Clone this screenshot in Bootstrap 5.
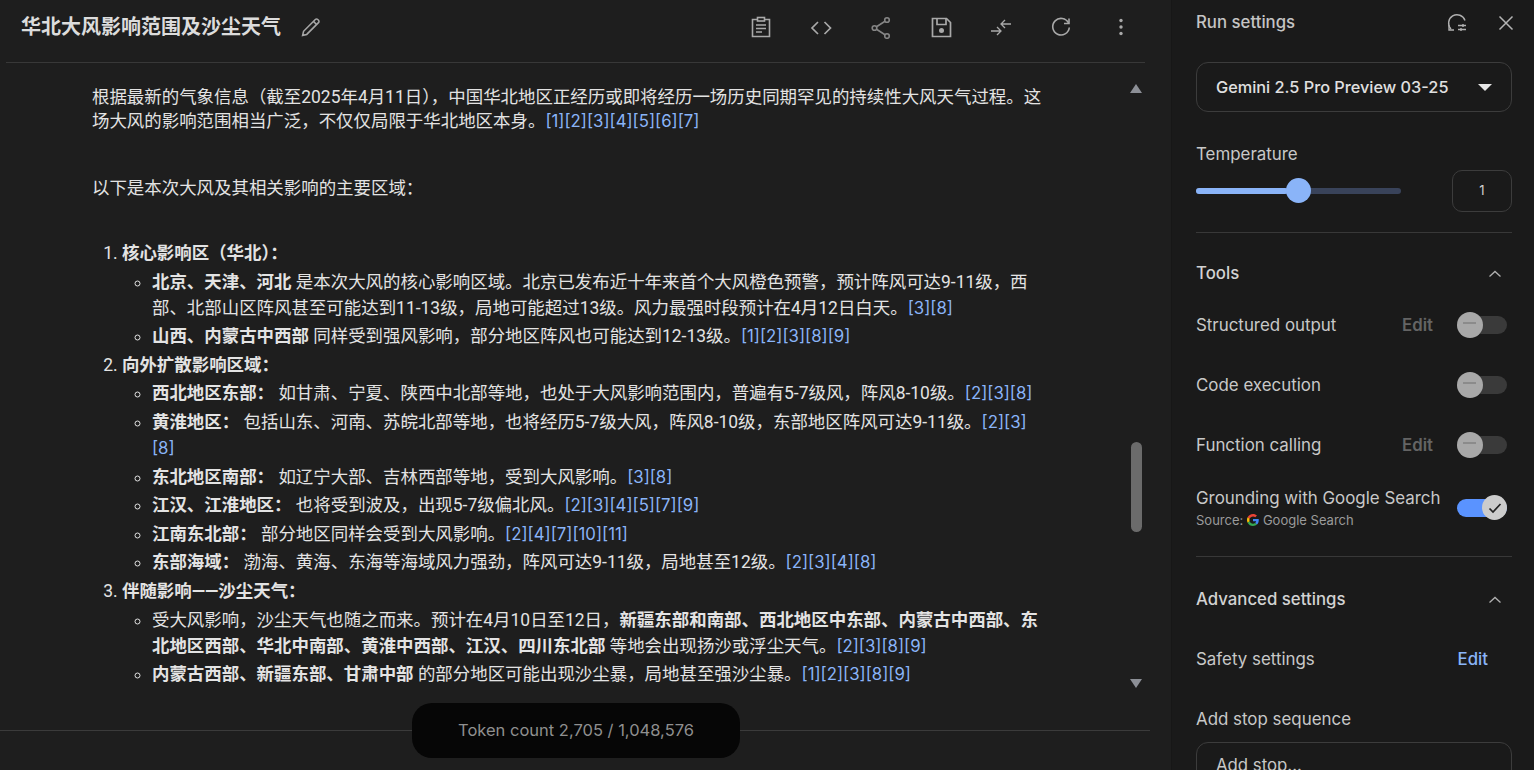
<!DOCTYPE html>
<html lang="zh-CN">
<head>
  <meta charset="UTF-8">
  <title>Run settings</title>
  <meta name="viewport" content="width=device-width, initial-scale=1">
  <link href="https://cdn.jsdelivr.net/npm/bootstrap@5.3.0/dist/css/bootstrap.min.css" rel="stylesheet">
  <style>
    html, body { height: 770px; overflow: hidden; }
    body { background: #1e1e1e; color: #e3e3e3; font-family: Inter, "Noto Sans CJK SC", sans-serif; font-size: 16px; }
    .app-main { width: 1172px; height: 770px; position: relative; border-right: 1px solid #171717; }
    .top-bar { height: 63px; margin: 0 26px 0 6px; padding: 0 12px 8px 15px; border-bottom: 1px solid #383838; }
    .doc-title { font-size: 20px; font-weight: 700; color: #dcdcdc; margin: 0; line-height: 1; }
    .edit-pen { margin-left: 19px; }
    .top-tools { gap: 36px; color: #a9a9a9; }
    .top-tools svg { display: block; }
    .chat-wrap { height: 667px; }
    .chat-text { width: 950px; margin-left: 92px; padding-top: 22px; font-family: Roboto, "Noto Sans CJK SC", sans-serif; font-size: 17.45px; line-height: 24px; color: #e3e3e3; }
    .chat-text p { margin: 0; }
    .para-gap { height: 43px; }
    .list-gap { height: 40px; }
    .chat-text b { font-weight: 700; }
    .cite { color: #8ab4f8; font-family: Inter, sans-serif; font-size: 16.8px; }
    .outer-list { margin: 0; padding: 0 0 0 30px; line-height: 26px; }
    .outer-list > li { margin-bottom: 2.6px; }
    .inner-list { list-style: circle; margin: 0; padding: 0 0 0 30px; }
    .inner-list > li { margin-top: 2.6px; }
    .scroll-col { position: absolute; left: 1126px; top: 63px; width: 20px; height: 640px; }
    .scroll-thumb { position: absolute; left: 5px; top: 379px; width: 11px; height: 90px; border-radius: 6px; background: #6b6b6b; }
    .arrow-up, .arrow-down { position: absolute; left: 4px; width: 0; height: 0; border-left: 6.5px solid transparent; border-right: 6.5px solid transparent; }
    .arrow-up { top: 21px; border-bottom: 9px solid #8c8f96; }
    .arrow-down { top: 616px; border-top: 9px solid #8c8f96; }
    .foot-line { margin: 0 21px 0 0; border-top: 1px solid #3b3b3b; }
    .token-pill { position: absolute; left: 412px; top: 703px; width: 328px; height: 55px; border-radius: 20px; background: #060606; color: #8f8f8f; font-size: 16.5px; }
    .side-panel { width: 362px; height: 770px; background: #1a1a1a; padding: 0 22px 0 24px; overflow: hidden; flex: none; }
    .side-head { height: 45px; }
    .side-title { font-size: 16.8px; font-weight: 500; color: #c4c4c4; }
    .head-icons { gap: 28px; margin-right: -4px; }
    .model-box { height: 50px; margin-top: 17px; border: 1px solid #3c3c3c; border-radius: 12px; padding: 0 19px; font-size: 16.3px; font-weight: 500; color: #e0e0e0; }
    .caret-down { width: 0; height: 0; border-left: 7px solid transparent; border-right: 7px solid transparent; border-top: 7px solid #e6e6e6; }
    .side-label { font-size: 16.9px; color: #c8c8c8; line-height: 20px; }
    .temp-label { margin-top: 32px; }
    .temp-row { height: 42px; margin-top: 6px; }
    .temp-track { position: relative; width: 205px; height: 6px; border-radius: 3px; background: #39435a; }
    .temp-fill { height: 6px; border-radius: 3px; background: #8ab4f8; }
    .temp-knob { position: absolute; left: 90px; top: -10px; width: 25px; height: 25px; border-radius: 50%; background: #8ab4f8; }
    .temp-val { width: 60px; height: 42px; border: 1px solid #3c3c3c; border-radius: 10px; font-size: 13px; color: #d0d0d0; }
    .side-rule { border-top: 1px solid #383838; }
    .rule-one { margin-top: 20px; }
    .tools-head { margin-top: 28px; }
    .sect-title { font-size: 16.8px; font-weight: 500; color: #d2d2d2; }
    .sect-chev { margin-right: 9px; }
    .tool-list { margin-top: 9px; }
    .tool-row { height: 60px; }
    .ground-row { margin-top: 3px; }
    .edit-off { font-size: 16.8px; font-weight: 600; color: #646464; margin-right: 24px; }
    .edit-on { font-size: 16.8px; font-weight: 500; color: #8ab4f8; margin-right: 24px; }
    .sw-off, .sw-on { position: relative; width: 50px; height: 18px; border-radius: 9px; flex: none; margin-right: 5px; }
    .sw-off { background: #3a3a3a; }
    .sw-off .sw-dot { position: absolute; left: 0; top: -4px; width: 26px; height: 26px; border-radius: 50%; background: #a8a8a8; }
    .sw-off .sw-dot::after { content: ""; position: absolute; left: 6px; top: 10px; width: 13px; height: 2px; background: #8b8b8b; }
    .sw-on { background: #5a93ff; }
    .sw-on .sw-dot { position: absolute; left: 25px; top: -4px; width: 25px; height: 25px; border-radius: 50%; background: #cccccc; }
    .src-line { font-size: 13px; color: #9b9b9b; line-height: 16px; margin-top: 4px; }
    .rule-two { margin-top: 18px; }
    .adv-head { margin-top: 30px; }
    .safety-row { margin-top: 17px; }
    .stop-label { margin-top: 20px; }
    .stop-box { height: 60px; margin-top: 13px; border: 1px solid #3c3c3c; border-radius: 12px; padding: 10px 19px; font-size: 16.8px; color: #c8c8c8; }
  </style>
</head>
<body>
  <div class="d-flex">
    <div class="app-main flex-grow-0 flex-shrink-0">
      <div class="top-bar d-flex align-items-center justify-content-between">
        <div class="d-flex align-items-center">
          <h1 class="doc-title">华北大风影响范围及沙尘天气</h1>
          <svg class="edit-pen" width="21" height="21" viewBox="0 0 20 20" fill="none" stroke="#a6a6a6" stroke-width="1.5"><path d="M2.5 17.5l.9-3.900L14.6 2.400a1.600 1.600 0 0 1 2.300 0l.7.7a1.600 1.600 0 0 1 0 2.300L6.400 16.600z"/><path d="M12.800 4.200l3 3"/></svg>
        </div>
        <div class="top-tools d-flex align-items-center">
          <svg width="24" height="24" viewBox="0 0 24 24" fill="none" stroke="currentColor" stroke-width="1.6"><path d="M8.500 4.500H3.500v17h17v-17h-5"/><rect x="8.500" y="2.500" width="7" height="3.500" fill="#1e1e1e"/><path d="M7 10h10M7 13.500h10M7 17h6"/></svg>
          <svg width="24" height="24" viewBox="0 0 24 24" fill="none" stroke="currentColor" stroke-width="1.7"><path d="M9 7l-6 6 6 6M15.500 7l6 6-6 6"/></svg>
          <svg width="24" height="24" viewBox="0 0 24 24" fill="none" stroke="#858585" stroke-width="1.6"><circle cx="18" cy="5" r="2.300"/><circle cx="5.500" cy="13" r="2.300"/><circle cx="18" cy="21" r="2.300"/><path d="M7.500 11.700l8.500-5.400M7.500 14.300l8.500 5.400"/></svg>
          <svg width="24" height="24" viewBox="0 0 24 24" fill="none" stroke="currentColor" stroke-width="1.7"><path d="M3.500 3.500h14l4 4v14h-18z"/><path d="M8 3.500v6h9v-6"/><circle cx="12.500" cy="15.500" r="2.500" fill="currentColor" stroke="none"/></svg>
          <svg width="24" height="24" viewBox="0 0 24 24" fill="none" stroke="currentColor" stroke-width="1.300"><path d="M2 16h10M8 12l4 4-4 4M22 9H12M16 5l-4 4 4 4"/></svg>
          <svg width="24" height="24" viewBox="0 0 24 24" fill="none" stroke="currentColor" stroke-width="1.600"><path d="M19.500 8A8.300 8.300 0 1 0 20.300 12.500"/><path d="M20 3.500V8.500h-5"/></svg>
          <svg width="24" height="24" viewBox="0 0 24 24" fill="currentColor"><circle cx="12" cy="5.500" r="1.700"/><circle cx="12" cy="12" r="1.700"/><circle cx="12" cy="18.500" r="1.700"/></svg>
        </div>
      </div>

      <div class="chat-wrap">
        <div class="chat-text">
          <p>根据最新的气象信息（截至2025年4月11日），中国华北地区正经历或即将经历一场历史同期罕见的持续性大风天气过程。这场大风的影响范围相当广泛，不仅仅局限于华北地区本身。<span class="cite">[1][2][3][4][5][6][7]</span></p>
          <div class="para-gap"></div>
          <p>以下是本次大风及其相关影响的主要区域：</p>
          <div class="list-gap"></div>
          <ol class="outer-list">
            <li><b>核心影响区（华北）：</b>
              <ul class="inner-list">
                <li><b>北京、天津、河北</b> 是本次大风的核心影响区域。北京已发布近十年来首个大风橙色预警，预计阵风可达9-11级，西部、北部山区阵风甚至可能达到11-13级，局地可能超过13级。风力最强时段预计在4月12日白天。<span class="cite">[3][8]</span></li>
                <li><b>山西、内蒙古中西部</b> 同样受到强风影响，部分地区阵风也可能达到12-13级。<span class="cite">[1][2][3][8][9]</span></li>
              </ul>
            </li>
            <li><b>向外扩散影响区域：</b>
              <ul class="inner-list">
                <li><b>西北地区东部：</b> 如甘肃、宁夏、陕西中北部等地，也处于大风影响范围内，普遍有5-7级风，阵风8-10级。<span class="cite">[2][3][8]</span></li>
                <li><b>黄淮地区：</b> 包括山东、河南、苏皖北部等地，也将经历5-7级大风，阵风8-10级，东部地区阵风可达9-11级。<span class="cite">[2][3]<wbr>[8]</span></li>
                <li><b>东北地区南部：</b> 如辽宁大部、吉林西部等地，受到大风影响。<span class="cite">[3][8]</span></li>
                <li><b>江汉、江淮地区：</b> 也将受到波及，出现5-7级偏北风。<span class="cite">[2][3][4][5][7][9]</span></li>
                <li><b>江南东北部：</b> 部分地区同样会受到大风影响。<span class="cite">[2][4][7][10][11]</span></li>
                <li><b>东部海域：</b> 渤海、黄海、东海等海域风力强劲，阵风可达9-11级，局地甚至12级。<span class="cite">[2][3][4][8]</span></li>
              </ul>
            </li>
            <li><b>伴随影响——沙尘天气：</b>
              <ul class="inner-list">
                <li>受大风影响，沙尘天气也随之而来。预计在4月10日至12日，<b>新疆东部和南部、西北地区中东部、内蒙古中西部、东北地区西部、华北中南部、黄淮中西部、江汉、四川东北部</b> 等地会出现扬沙或浮尘天气。<span class="cite">[2][3][8][9]</span></li>
                <li><b>内蒙古西部、新疆东部、甘肃中部</b> 的部分地区可能出现沙尘暴，局地甚至强沙尘暴。<span class="cite">[1][2][3][8][9]</span></li>
              </ul>
            </li>
          </ol>
        </div>
      </div>
      <div class="foot-line"></div>

      <div class="scroll-col">
        <div class="arrow-up"></div>
        <div class="scroll-thumb"></div>
        <div class="arrow-down"></div>
      </div>
      <div class="token-pill d-flex align-items-center justify-content-center">Token count 2,705 / 1,048,576</div>
    </div>

    <aside class="side-panel">
      <div class="side-head d-flex align-items-center justify-content-between">
        <span class="side-title">Run settings</span>
        <div class="head-icons d-flex align-items-center">
          <svg width="22" height="22" viewBox="0 0 22 22" fill="none" stroke="#b0b0b0" stroke-width="1.4"><path d="M19 8.500A8.400 8.400 0 1 0 5 17"/><path d="M3 13v5h5"/><path d="M12 13.500h8M12 17.500h8"/><path d="M17 12v3M15 16v3"/></svg>
          <svg width="20" height="20" viewBox="0 0 20 20" fill="none" stroke="#b4b4b4" stroke-width="1.5"><path d="M3.500 3.500l13 13M16.500 3.500l-13 13"/></svg>
        </div>
      </div>
      <div class="model-box d-flex align-items-center justify-content-between">
        <span>Gemini 2.5 Pro Preview 03-25</span>
        <span class="caret-down"></span>
      </div>
      <div class="side-label temp-label">Temperature</div>
      <div class="temp-row d-flex align-items-center justify-content-between">
        <div class="temp-track"><div class="temp-fill" style="width: 45%"></div><div class="temp-knob"></div></div>
        <div class="temp-val d-flex align-items-center justify-content-center">1</div>
      </div>
      <div class="side-rule rule-one"></div>
      <div class="tools-head d-flex align-items-center justify-content-between">
        <span class="sect-title">Tools</span>
        <svg class="sect-chev" width="16" height="16" viewBox="0 0 16 16" fill="none" stroke="#b0b0b0" stroke-width="1.3"><path d="M2.500 10.500L8 5.500l5.500 5"/></svg>
      </div>
      <div class="tool-list">
        <div class="tool-row d-flex align-items-center">
          <span class="side-label me-auto">Structured output</span><span class="edit-off">Edit</span><div class="sw-off"><div class="sw-dot"></div></div>
        </div>
        <div class="tool-row d-flex align-items-center">
          <span class="side-label me-auto">Code execution</span><div class="sw-off"><div class="sw-dot"></div></div>
        </div>
        <div class="tool-row d-flex align-items-center">
          <span class="side-label me-auto">Function calling</span><span class="edit-off">Edit</span><div class="sw-off"><div class="sw-dot"></div></div>
        </div>
        <div class="tool-row ground-row d-flex align-items-center">
          <div class="me-auto">
            <div class="side-label">Grounding with Google Search</div>
            <div class="src-line d-flex align-items-center">Source:&nbsp;
              <svg class="me-1" width="12" height="12" viewBox="0 0 48 48"><path fill="#EA4335" d="M24 9.500c3.500 0 6.700 1.300 9.100 3.400l6.800-6.800C35.800 2.400 30.200 0 24 0 14.600 0 6.500 5.400 2.600 13.200l7.900 6.200C12.400 13.700 17.700 9.500 24 9.500z"/><path fill="#4285F4" d="M47 24.500c0-1.600-.2-3.100-.4-4.500H24v9h12.900c-.6 3-2.300 5.500-4.800 7.200l7.700 6C44.300 38 47 31.800 47 24.500z"/><path fill="#FBBC05" d="M10.500 28.600A14.500 14.500 0 0 1 10.500 19.400l-7.900-6.200A24 24 0 0 0 2.600 34.800z"/><path fill="#34A853" d="M24 48c6.500 0 11.900-2.100 15.900-5.800l-7.700-6c-2.200 1.500-4.900 2.300-8.200 2.300-6.300 0-11.600-4.200-13.500-9.900l-7.900 6.200C6.500 42.600 14.600 48 24 48z"/></svg>Google Search</div>
          </div>
          <div class="sw-on"><div class="sw-dot d-flex align-items-center justify-content-center"><svg width="16" height="16" viewBox="0 0 16 16" fill="none" stroke="#222" stroke-width="1.7"><path d="M2.500 8.500l3.500 3.500 7.500-8"/></svg></div></div>
        </div>
      </div>
      <div class="side-rule rule-two"></div>
      <div class="adv-head d-flex align-items-center justify-content-between">
        <span class="sect-title">Advanced settings</span>
        <svg class="sect-chev" width="16" height="16" viewBox="0 0 16 16" fill="none" stroke="#b0b0b0" stroke-width="1.3"><path d="M2.500 10.500L8 5.500l5.500 5"/></svg>
      </div>
      <div class="tool-row safety-row d-flex align-items-center">
        <span class="side-label me-auto">Safety settings</span><span class="edit-on">Edit</span>
      </div>
      <div class="side-label stop-label">Add stop sequence</div>
      <div class="stop-box">Add stop...</div>
    </aside>
  </div>
</body>
</html>
